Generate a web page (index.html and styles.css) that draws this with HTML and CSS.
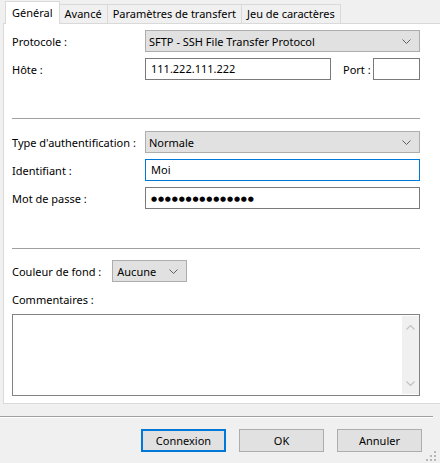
FILE: index.html
```html
<!DOCTYPE html>
<html lang="fr">
<head>
    <meta charset="UTF-8">
    <title>Gestionnaire de Sites</title>
    <link rel="stylesheet" href="styles.css">
</head>
<body>

    <div class="dialog">
        <div class="tabs">
            <div class="tab active">Général</div>
            <div class="tab">Avancé</div>
            <div class="tab">Paramètres de transfert</div>
            <div class="tab">Jeu de caractères</div>
        </div>

        <div class="panel">
            <div class="form-grid">
                <div class="label">Protocole :</div>
                <div class="combo">
                    <span>SFTP - SSH File Transfer Protocol</span>
                    <svg class="chevron" width="9" height="5" viewBox="0 0 9 5"><polyline points="0.5,0.5 4.5,4.5 8.5,0.5" fill="none" stroke="#606060" stroke-width="1"/></svg>
                </div>

                <div class="label">Hôte :</div>
                <div class="host-row">
                    <div class="field host">111.222.111.222</div>
                    <div class="label port-label">Port :</div>
                    <div class="field port"></div>
                </div>
            </div>

            <div class="sep first"></div>

            <div class="form-grid">
                <div class="label">Type d'authentification :</div>
                <div class="combo">
                    <span>Normale</span>
                    <svg class="chevron" width="9" height="5" viewBox="0 0 9 5"><polyline points="0.5,0.5 4.5,4.5 8.5,0.5" fill="none" stroke="#606060" stroke-width="1"/></svg>
                </div>

                <div class="label">Identifiant :</div>
                <div class="field focused">Moi</div>

                <div class="label">Mot de passe :</div>
                <div class="field"><span class="dots">●●●●●●●●●●●●●●●</span></div>
            </div>

            <div class="sep second"></div>

            <div class="color-row">
                <div class="label">Couleur de fond :</div>
                <div class="combo small">
                    <span>Aucune</span>
                    <svg class="chevron" width="9" height="5" viewBox="0 0 9 5"><polyline points="0.5,0.5 4.5,4.5 8.5,0.5" fill="none" stroke="#606060" stroke-width="1"/></svg>
                </div>
            </div>

            <div class="label comments-label">Commentaires :</div>
            <div class="memo">
                <div class="memo-text"></div>
                <div class="scrollbar">
                    <svg width="9" height="5" viewBox="0 0 9 5"><polyline points="0.5,4.5 4.5,0.5 8.5,4.5" fill="none" stroke="#c2c2c2" stroke-width="1.2"/></svg>
                    <svg width="9" height="5" viewBox="0 0 9 5"><polyline points="0.5,0.5 4.5,4.5 8.5,0.5" fill="none" stroke="#c2c2c2" stroke-width="1.2"/></svg>
                </div>
            </div>
        </div>

        <div class="footer">
            <button class="default">Connexion</button>
            <button>OK</button>
            <button>Annuler</button>
        </div>

        <!-- size grip in the bottom right corner -->
        <svg class="grip" width="11" height="11" viewBox="0 0 11 11">
            <rect x="8" y="0" width="2" height="2" fill="#b8b8b8"/>
            <rect x="4" y="4" width="2" height="2" fill="#b8b8b8"/>
            <rect x="8" y="4" width="2" height="2" fill="#b8b8b8"/>
            <rect x="0" y="8" width="2" height="2" fill="#b8b8b8"/>
            <rect x="4" y="8" width="2" height="2" fill="#b8b8b8"/>
            <rect x="8" y="8" width="2" height="2" fill="#b8b8b8"/>
        </svg>
    </div>

</body>
</html>
```

FILE: styles.css
```css
body {
    font-family: 'Noto Sans', 'Liberation Sans', sans-serif;
    font-size: 11px;
    color: #000;
    margin: 0;
    padding: 0;
    background-color: #f0f0f0;
}

.dialog {
    position: relative;
    width: 440px;
    height: 463px;
}

/* tab strip */
.tabs {
    display: flex;
    align-items: flex-end;
    height: 23px;
    padding-left: 5px;
}

.tab {
    height: 18px;
    line-height: 18px;
    padding: 0 5px;
    border: 1px solid #d9d9d9;
    border-bottom: none;
    margin-left: -1px;
    background-color: #f0f0f0;
}

.tab.active {
    position: relative;
    z-index: 1;
    height: 22px;
    line-height: 21px;
    margin-bottom: -1px;
    margin-left: 0;
    padding: 0 6px;
    background-color: #fff;
}

/* page content */
.panel {
    margin-left: 3px;
    width: 422px;
    height: 366px;
    padding: 6px 6px 7px 8px;
    background-color: #fff;
    border: 1px solid #d9d9d9;
}

.form-grid {
    display: grid;
    grid-template-columns: 133px 275px;
    grid-auto-rows: 22px;
    row-gap: 6px;
    align-items: center;
}

.label {
    white-space: nowrap;
}

.combo {
    display: flex;
    align-items: center;
    justify-content: space-between;
    height: 20px;
    padding: 0 8px 0 3px;
    border: 1px solid #adadad;
    background-color: #e1e1e1;
}

.combo.small {
    width: 61px;
    padding-left: 4px;
}

.chevron {
    display: block;
}

.field {
    height: 20px;
    line-height: 20px;
    padding: 0 5px;
    border: 1px solid #7a7a7a;
    background-color: #fff;
}

.field.focused {
    border-color: #0078d7;
}

.dots {
    font-family: 'DejaVu Sans', sans-serif;
    font-size: 7px;
    letter-spacing: 0.8px;
    position: relative;
    top: -1px;
}

.host-row {
    display: flex;
    align-items: center;
    height: 22px;
}

.field.host {
    width: 174px;
}

.port-label {
    margin-left: 12px;
}

.field.port {
    width: 35px;
    margin-left: auto;
}

.sep {
    height: 1px;
    width: 408px;
    background-color: #a0a0a0;
}

.sep.first {
    margin: 38px 0 12px;
}

.sep.second {
    margin: 39px 0 11px;
}

.color-row {
    display: flex;
    align-items: center;
    gap: 11px;
    height: 22px;
}

.comments-label {
    height: 16px;
    line-height: 16px;
    margin: 10px 0 6px;
}

.memo {
    display: flex;
    width: 406px;
    height: 80px;
    border: 1px solid #828282;
    background-color: #fff;
}

.memo-text {
    flex: 1;
}

.scrollbar {
    display: flex;
    flex-direction: column;
    justify-content: space-between;
    align-items: center;
    width: 17px;
    margin: 1px 0;
    padding: 9px 0 8px;
    box-sizing: border-box;
    background-color: #f0f0f0;
}

.scrollbar svg {
    display: block;
}

/* dialog buttons */
.footer {
    display: flex;
    justify-content: flex-end;
    gap: 13px;
    width: 422px;
    margin-top: 12px;
    padding: 12px 11px 0 0;
    border-top: 1px solid #a0a0a0;
    box-shadow: inset 0 1px 0 #fff;
}

.footer button {
    width: 85px;
    height: 23px;
    padding: 0;
    font-family: inherit;
    font-size: 11px;
    color: #000;
    background-color: #e1e1e1;
    border: 1px solid #adadad;
}

.footer button.default {
    border: 2px solid #0078d7;
}

.grip {
    position: absolute;
    right: 3px;
    bottom: 1px;
}
```
